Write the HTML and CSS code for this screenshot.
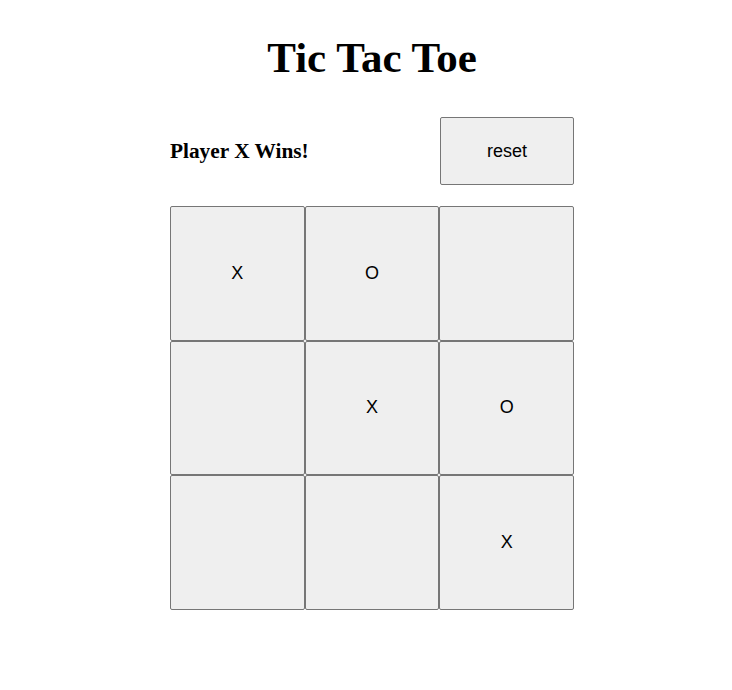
FILE: index.html
```html
<!DOCTYPE html>
<html>
<head>
<meta charset="utf-8">
<title>Tic Tac Toe</title>
<link rel="stylesheet" href="styles.css">
</head>
<body>
<div class="game">
  <h1 class="title">Tic Tac Toe</h1>
  <div class="status-row">
    <div class="status">Player X Wins!</div>
    <button class="reset">reset</button>
  </div>
  <div class="board">
    <button class="cell">X</button>
    <button class="cell">O</button>
    <button class="cell"></button>
    <button class="cell"></button>
    <button class="cell">X</button>
    <button class="cell">O</button>
    <button class="cell"></button>
    <button class="cell"></button>
    <button class="cell">X</button>
  </div>
</div>
</body>
</html>
```

FILE: styles.css
```css
html, body {
  margin: 0;
  padding: 0;
  background: #ffffff;
}

body {
  font-family: "Liberation Serif", "Times New Roman", serif;
  color: #000;
}

.game {
  width: 404px;
  margin-left: 170px;
  padding-top: 1px;
}

.title {
  font-size: 43px;
  font-weight: bold;
  text-align: center;
  margin: 31.5px 0 0 0;
  line-height: 50px;
}

.status-row {
  display: flex;
  justify-content: space-between;
  align-items: center;
  margin-top: 34.5px;
  height: 68px;
}

.status {
  font-size: 21.33px;
  font-weight: bold;
}

button {
  font-family: "Liberation Sans", Arial, sans-serif;
  font-size: 18px;
  color: #000;
  background: #efefef;
  border: 1px solid #767676;
  border-radius: 2px;
  padding: 0;
  margin: 0;
}

.reset {
  width: 134px;
  height: 68px;
}

.board {
  margin-top: 21px;
  display: grid;
  grid-template-columns: repeat(3, 1fr);
  grid-auto-rows: 134.67px;
}

.cell {
  width: 100%;
  height: 100%;
}
```
